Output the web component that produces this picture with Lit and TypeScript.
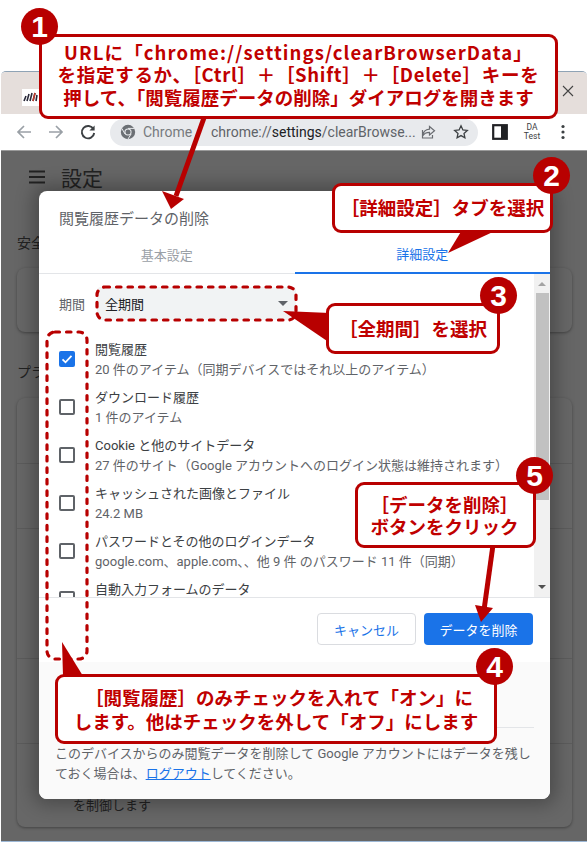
import { LitElement, html, css, svg } from "lit";
import { customElement } from "lit/decorators.js";

const ROWS: [string, string, boolean][] = [
  ["閲覧履歴", "20 件のアイテム（同期デバイスではそれ以上のアイテム）", true],
  ["ダウンロード履歴", "1 件のアイテム", false],
  ["Cookie と他のサイトデータ", "27 件のサイト（Google アカウントへのログイン状態は維持されます）", false],
  ["キャッシュされた画像とファイル", "24.2 MB", false],
  ["パスワードとその他のログインデータ", "google.com、apple.com、、他 9 件 のパスワード 11 件（同期）", false],
  ["自動入力フォームのデータ", "", false],
];

const BG_ROWS = [66, 65, 130, 85];

@customElement("app-root")
export class AppRoot extends LitElement {
  static styles = css`
    :host {
      display: block;
      position: relative;
      width: 588px;
      height: 842px;
      overflow: hidden;
      background: #fff;
      font-family: "Roboto", "Noto Sans CJK JP", sans-serif;
      color: #3c4043;
    }
    .window {
      margin: 71px 1px 0 1px;
      height: 769px;
      border-top: 1px solid #8fa3b5;
      border-bottom: 2px solid #9db8d6;
      border-radius: 5px 5px 0 0;
      display: flex;
      flex-direction: column;
      overflow: hidden;
    }
    .tabstrip {
      height: 42px;
      flex: none;
      background: #e5dedb;
      display: flex;
      align-items: center;
      justify-content: space-between;
      padding: 8px 12px 0 21px;
      box-sizing: border-box;
    }
    .favicon { width: 17px; height: 17px; background: #fff; display: block; }
    .close { width: 14px; height: 14px; margin-top: -12px; display: block; }
    .toolbar {
      height: 37px;
      flex: none;
      background: #fff;
      border-bottom: 1px solid #9a9a9a;
      display: flex;
      align-items: center;
      padding: 0 12px 0 14px;
      box-sizing: border-box;
    }
    .tool { width: 18px; height: 18px; flex: none; display: block; }
    .nav1 { margin-right: 14px; }
    .nav2 { margin-right: 14px; }
    .nav3 { margin-right: 13px; }
    .omni {
      width: 368px;
      height: 27px;
      flex: none;
      border-radius: 14px;
      background: #e8eaed;
      display: flex;
      align-items: center;
      padding: 0 9px 0 10px;
      box-sizing: border-box;
      font-size: 14px;
      color: #777a7e;
      white-space: nowrap;
    }
    .omni .gicon { width: 16px; height: 16px; flex: none; margin-right: 7px; display: block; }
    .omni .origin { width: 68px; flex: none; }
    .omni .url { flex: 1; color: #5f6368; font-size: 14px; overflow: hidden; }
    .omni .url b { font-weight: 400; color: #202124; }
    .omni .oi { width: 16px; height: 16px; flex: none; display: block; }
    .omni .share { margin-right: 17px; }
    .panel { margin-left: 14px; width: 16px; height: 16px; flex: none; display: block; }
    .da {
      margin-left: 12px;
      width: 24px;
      flex: none;
      font-size: 8.5px;
      line-height: 9px;
      text-align: center;
      color: #3c4043;
    }
    .dots { margin-left: 11px; width: 16px; height: 16px; flex: none; display: block; }
    .page {
      flex: 1;
      background: #666666;
      color: #222;
      display: flex;
      flex-direction: column;
      padding: 0 15px 0 16px;
      min-height: 0;
    }
    .pagehead {
      height: 51px;
      display: flex;
      align-items: center;
      gap: 15px;
      padding-left: 11px;
      font-size: 21px;
      flex: none;
      margin-bottom: 1px;
    }
    .burger { width: 18px; height: 18px; display: block; }
    .h { font-size: 14px; line-height: 20px; height: 20px; margin: 30px 0 15px 0; flex: none; }
    .bgcard {
      flex: none;
      height: 64px;
      border-radius: 8px;
      background: #676767;
      box-shadow: 0 1px 3px rgba(0, 0, 0, 0.35);
    }
    .h2 { margin: 30px 0 16px 0; }
    .bgcard.tall {
      height: 429px;
      display: flex;
      flex-direction: column;
      box-sizing: border-box;
      font-size: 13px;
      line-height: 18px;
      color: #222;
    }
    .bgrow { flex: none; border-bottom: 1px solid #5c5c5c; box-sizing: border-box; }
    .bgtext { flex: 1; display: flex; align-items: flex-end; padding: 0 0 12px 56px; }
    .dialog {
      position: absolute;
      left: 39px;
      top: 191px;
      width: 511px;
      height: 608px;
      background: #fff;
      border-radius: 8px;
      box-shadow: 0 0 18px 6px rgba(0, 0, 0, 0.28);
      display: flex;
      flex-direction: column;
      overflow: hidden;
    }
    .title {
      height: 44px;
      flex: none;
      box-sizing: border-box;
      padding: 18px 20px 0;
      font-size: 15px;
      line-height: 20px;
      color: #5f6368;
    }
    .tabs {
      height: 39px;
      flex: none;
      display: flex;
      border-bottom: 1px solid #e3e5e8;
      font-size: 13px;
      box-sizing: border-box;
    }
    .tab {
      flex: 1;
      display: flex;
      align-items: center;
      justify-content: center;
      color: #9aa0a6;
      box-sizing: border-box;
    }
    .tab.on { color: #1a73e8; border-bottom: 2px solid #1a73e8; margin-bottom: -1px; }
    .body { height: 324px; flex: none; display: flex; overflow: hidden; border-bottom: 1px solid #e3e5e8; box-sizing: border-box; }
    .list { flex: 1; min-width: 0; overflow: hidden; }
    .period {
      display: flex;
      align-items: center;
      gap: 12px;
      padding: 13px 0 0 20px;
      font-size: 13px;
      color: #5f6368;
      height: 33px;
    }
    .select {
      width: 199px;
      height: 33px;
      box-sizing: border-box;
      border-radius: 4px;
      background: #f1f3f4;
      color: #202124;
      font-size: 13px;
      display: flex;
      align-items: center;
      justify-content: space-between;
      padding: 0 8px 0 8px;
    }
    .caret { width: 0; height: 0; border: 5px solid transparent; border-top: 5px solid #5f6368; border-bottom: 0; }
    .rows { padding-top: 15px; margin-top: 5px; }
    .row { height: 48px; display: flex; gap: 20px; padding-left: 20px; box-sizing: border-box; }
    .box {
      width: 16px;
      height: 16px;
      flex: none;
      margin-top: 11px;
      box-sizing: border-box;
      border: 2px solid #5f6368;
      border-radius: 2px;
      background: #fff;
    }
    .box.checked { border: 0; background: #1a73e8; }
    .box svg { display: block; width: 16px; height: 16px; }
    .rowtitle { font-size: 13px; line-height: 20px; color: #3c4043; white-space: nowrap; }
    .rowsub { font-size: 13px; line-height: 19px; color: #5f6368; white-space: nowrap; }
    .scroll {
      width: 16px;
      flex: none;
      background: #f1f1f1;
      display: flex;
      flex-direction: column;
      align-items: center;
    }
    .sb-up { width: 0; height: 0; border: 4px solid transparent; border-top: 0; border-bottom: 4px solid #a3a3a3; margin-top: 8px; }
    .sb-thumb { width: 13px; height: 207px; background: #c1c1c1; margin-top: 7px; }
    .sb-down { width: 0; height: 0; border: 4px solid transparent; border-bottom: 0; border-top: 4px solid #505050; margin-top: auto; margin-bottom: 8px; }
    .actions {
      height: 64px;
      flex: none;
      display: flex;
      justify-content: flex-end;
      gap: 8px;
      padding: 15px 17px 0 0;
      box-sizing: border-box;
    }
    .btn {
      height: 32px;
      border-radius: 4px;
      font-size: 13px;
      display: flex;
      align-items: center;
      justify-content: center;
      box-sizing: border-box;
    }
    .cancel { width: 99px; border: 1px solid #dadce0; color: #1a73e8; background: #fff; }
    .del { width: 109px; background: #1a73e8; color: #fff; }
    .foot {
      flex: 1;
      background: #fafafa;
      padding: 65px 16px 0 16px;
      display: flex;
      flex-direction: column;
      font-size: 13px;
      line-height: 20px;
      color: #5f6368;
    }
    .rule { height: 1px; background: #e3e5e8; margin-bottom: 16px; }
    .foot a { color: #1a73e8; text-decoration: underline; }
    .marks { position: absolute; left: 0; top: 0; width: 588px; height: 842px; pointer-events: none; }
    .callout {
      position: absolute;
      box-sizing: border-box;
      background: #fff;
      border: 3px solid #b80000;
      border-radius: 9px;
      color: #c00000;
      font-weight: 700;
      font-size: 18.5px;
      line-height: 22.5px;
      text-align: center;
      font-family: "Noto Sans CJK JP", sans-serif;
      display: flex;
      flex-direction: column;
      justify-content: center;
      white-space: nowrap;
    }
    .c1 { left: 39px; top: 34px; width: 519px; height: 85px; padding-bottom: 4px; }
    .c1 .l1 { letter-spacing: 1.1px; }
    .c1 .l2 { letter-spacing: 0.7px; }
    .c2 { left: 332px; top: 183px; width: 221px; height: 50px; padding-bottom: 2px; }
    .c3 { left: 326px; top: 303px; width: 174px; height: 51px; }
    .c4 { left: 55px; top: 674px; width: 442px; height: 70px; line-height: 24px; }
    .c4 .ind { padding-left: 6px; }
    .c5 { left: 355px; top: 482px; width: 181px; height: 66px; line-height: 22px; padding-right: 2px; }
    .num {
      position: absolute;
      width: 37px;
      height: 37px;
      border-radius: 50%;
      background: #b80000;
      color: #fff;
      font-family: "Liberation Sans", sans-serif;
      font-weight: 700;
      font-size: 30px;
      line-height: 37px;
      text-align: center;
    }
    .n1 { left: 21px; top: 8px; }
    .n2 { left: 533px; top: 157px; }
    .n3 { left: 480px; top: 277px; }
    .n4 { left: 476px; top: 648px; }
    .n5 { left: 516px; top: 457px; }
  `;

  private marks() {
    return svg`
      <rect x="97" y="287" width="199" height="33" rx="8" fill="none" stroke="#b80000" stroke-width="3.2" stroke-linecap="round" stroke-dasharray="4.5 7"/>
      <rect x="47" y="332" width="40" height="327" rx="8" fill="none" stroke="#b80000" stroke-width="3.2" stroke-linecap="round" stroke-dasharray="4.5 7"/>
      <line x1="205" y1="115" x2="176" y2="196" stroke="#b80000" stroke-width="5"/>
      <polygon points="171,209 162,191 184,199" fill="#b80000"/>
      <polygon points="462,230 497,230 448,253" fill="#b80000"/>
      <polygon points="283,311 330,313 330,343" fill="#b80000"/>
      <polygon points="62,642 63,676 83,676" fill="#b80000"/>
      <line x1="493" y1="545" x2="484" y2="610" stroke="#b80000" stroke-width="5"/>
      <polygon points="481,622 475,605 493,608" fill="#b80000"/>
    `;
  }

  render() {
    return html`
      <div class="window">
        <div class="tabstrip">
          <svg class="favicon" viewBox="0 0 17 17">
            <path d="M2 12l2-5M5 12l2-7M8 12l2-8M11 12l2-8M14 12l1-6" stroke="#2a2a3a" stroke-width="1.6" fill="none"/>
            <path d="M11 12l2-8" stroke="#c0392b" stroke-width="1.6" fill="none"/>
          </svg>
          <svg class="close" viewBox="0 0 14 14"><path d="M2 2l10 10M12 2L2 12" stroke="#444" stroke-width="1.1" fill="none"/></svg>
        </div>
        <div class="toolbar">
          <svg class="tool nav1" viewBox="0 0 18 18"><path d="M16 9H3M9 3L3 9l6 6" stroke="#9aa0a6" stroke-width="1.7" fill="none"/></svg>
          <svg class="tool nav2" viewBox="0 0 18 18"><path d="M2 9h13M9 3l6 6-6 6" stroke="#9aa0a6" stroke-width="1.7" fill="none"/></svg>
          <svg class="tool nav3" viewBox="0 0 18 18"><path d="M14.5 6.2A6.2 6.2 0 1 0 15.2 10" stroke="#3c4043" stroke-width="1.9" fill="none"/><path d="M15.6 2.4v5.2h-5.2z" fill="#3c4043"/></svg>
          <div class="omni">
            <svg class="gicon" viewBox="0 0 16 16"><circle cx="8" cy="8" r="7.2" fill="#6c7075"/><circle cx="8" cy="8" r="3.6" fill="#e8eaed"/><circle cx="8" cy="8" r="2.5" fill="#6c7075"/><path d="M8 4.4h6.4M5 10L1.9 4.5M11.1 10L7.9 15.2" stroke="#e8eaed" stroke-width="1"/></svg>
            <span class="origin">Chrome</span>
            <span class="url">chrome://<b>settings</b>/clearBrowse...</span>
            <svg class="oi share" viewBox="0 0 16 16"><path d="M9.5 2.5l5 4.2-5 4.2V8.3C6 8.3 4 9.5 2.6 12c.4-4 2.6-6.5 6.9-6.9z M2.5 6v8h10v-3" stroke="#6a6d72" stroke-width="1.2" fill="none"/></svg>
            <svg class="oi" viewBox="0 0 16 16"><path d="M8 1.8l1.9 4.1 4.4.5-3.3 3 .9 4.4L8 11.6l-3.9 2.2.9-4.4-3.3-3 4.4-.5z" stroke="#3c4043" stroke-width="1.3" fill="none"/></svg>
          </div>
          <svg class="panel" viewBox="0 0 16 16"><rect x="1.2" y="1.2" width="13.6" height="13.6" fill="none" stroke="#202124" stroke-width="2.2"/><rect x="9" y="1" width="6" height="14" fill="#202124"/></svg>
          <div class="da">DA<br />Test</div>
          <svg class="dots" viewBox="0 0 16 16"><circle cx="8" cy="2.5" r="1.6" fill="#3c4043"/><circle cx="8" cy="8" r="1.6" fill="#3c4043"/><circle cx="8" cy="13.5" r="1.6" fill="#3c4043"/></svg>
        </div>
        <div class="page">
          <div class="pagehead">
            <svg class="burger" viewBox="0 0 18 18"><path d="M1 3.5h16M1 9h16M1 14.500h16" stroke="#222" stroke-width="2" fill="none"/></svg>
            <span>設定</span>
          </div>
          <div class="h">安全</div>
          <div class="bgcard"></div>
          <div class="h h2">プライバシー</div>
          <div class="bgcard tall">
            ${BG_ROWS.map((h) => html`<div class="bgrow" style="height:${h}px"></div>`)}
            <div class="bgtext">を制御します</div>
          </div>
        </div>
      </div>

      <div class="dialog">
        <div class="title">閲覧履歴データの削除</div>
        <div class="tabs">
          <div class="tab">基本設定</div>
          <div class="tab on">詳細設定</div>
        </div>
        <div class="body">
          <div class="list">
            <div class="period">
              <span>期間</span>
              <div class="select"><span>全期間</span><span class="caret"></span></div>
            </div>
            <div class="rows">
              ${ROWS.map(
                ([t, s, c]) => html`
                  <div class="row">
                    <div class="box ${c ? "checked" : ""}">
                      ${c ? html`<svg viewBox="0 0 16 16"><path d="M3.500 8.300l3 3 6-6.500" stroke="#fff" stroke-width="1.8" fill="none"/></svg>` : ""}
                    </div>
                    <div>
                      <div class="rowtitle">${t}</div>
                      <div class="rowsub">${s}</div>
                    </div>
                  </div>
                `
              )}
            </div>
          </div>
          <div class="scroll">
            <div class="sb-up"></div>
            <div class="sb-thumb"></div>
            <div class="sb-down"></div>
          </div>
        </div>
        <div class="actions">
          <div class="btn cancel">キャンセル</div>
          <div class="btn del">データを削除</div>
        </div>
        <div class="foot">
          <div class="rule"></div>
          <div>このデバイスからのみ閲覧データを削除して Google アカウントにはデータを残しておく場合は、<a>ログアウト</a>してください。</div>
        </div>
      </div>

      <svg class="marks" viewBox="0 0 588 842">${this.marks()}</svg>

      <div class="callout c1">
        <div class="l1">URLに「chrome://settings/clearBrowserData」</div>
        <div class="l2">を指定するか、［Ctrl］＋［Shift］＋［Delete］キーを</div>
        <div>押して、「閲覧履歴データの削除」ダイアログを開きます</div>
      </div>
      <div class="callout c2">［詳細設定］タブを選択</div>
      <div class="callout c3">［全期間］を選択</div>
      <div class="callout c4">
        <div class="ind">［閲覧履歴］のみチェックを入れて「オン」に</div>
        <div>します。他はチェックを外して「オフ」にします</div>
      </div>
      <div class="callout c5">
        <div>［データを削除］</div>
        <div>ボタンをクリック</div>
      </div>
      <div class="num n1">1</div>
      <div class="num n2">2</div>
      <div class="num n3">3</div>
      <div class="num n4">4</div>
      <div class="num n5">5</div>
    `;
  }
}
